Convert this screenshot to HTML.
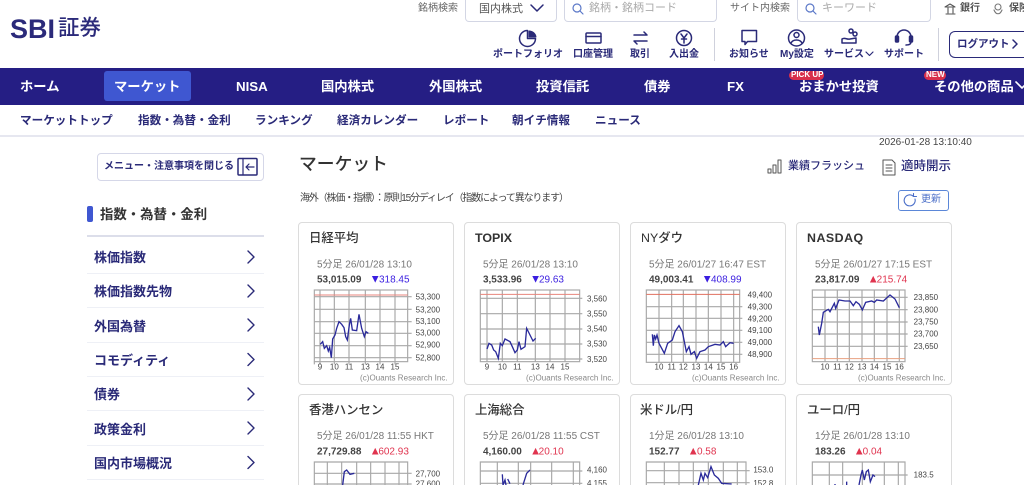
<!DOCTYPE html>
<html lang="ja"><head><meta charset="utf-8"><title>マーケット</title>
<style>
html,body{margin:0;padding:0;background:#fff;width:1024px;height:485px;overflow:hidden}
#w{position:absolute;left:0;top:0;width:1024px;height:485px;overflow:hidden;font-family:"Liberation Sans","Noto Sans CJK JP",sans-serif;color:#333}
.t{position:absolute;white-space:nowrap;line-height:1}
.box{position:absolute;box-sizing:border-box}
.n{color:#fff;font-weight:700;font-size:13.3px;top:80px}
.s{color:#2a2a78;font-weight:700;font-size:11.6px;top:115px}
.l{color:#2a2a78;font-weight:700;font-size:10px;top:50px}
.g{color:#666;font-size:10px;top:4px}
.p{color:#aaa;font-size:11px;top:3px}
.m{color:#2a2a78;font-weight:700;font-size:13px}
.sep{position:absolute;left:87px;width:177px;height:1px;background:#eef0f6}
.card{position:absolute;box-sizing:border-box;width:156px;height:163px;border:1px solid #dcdcdc;border-radius:4px;background:#fff}
.c2{height:91px;border-bottom:none;border-radius:4px 4px 0 0}
.top{top:0;height:22px;border:1px solid #d3d6e4;border-top:none;border-radius:0 0 4px 4px}
.ct{color:#333;font-size:12.4px;font-weight:500;top:232px}
svg{position:absolute;left:0;top:0}
svg text{font-family:"Liberation Sans","Noto Sans CJK JP",sans-serif}
</style></head><body><div id="w">

<div class="t" style="left:10px;top:16px;font-size:27px;font-weight:700;color:#2b2a7a;font-family:'Liberation Sans',sans-serif">SBI</div>
<div class="t" style="left:58px;top:18px;font-size:21.5px;font-weight:500;color:#2b2a7a">証券</div>

<div class="t g" style="left:418px">銘柄検索</div>
<div class="box top" style="left:465px;width:92px"></div>
<div class="t" style="left:479px;top:4px;font-size:11px;color:#555">国内株式</div>
<div class="box top" style="left:564px;width:153px"></div>
<div class="t p" style="left:589px">銘柄・銘柄コード</div>
<div class="t g" style="left:730px">サイト内検索</div>
<div class="box top" style="left:797px;width:134px"></div>
<div class="t p" style="left:822px">キーワード</div>
<div class="t" style="left:960px;top:4px;font-size:10px;color:#555;font-weight:700">銀行</div>
<div class="t" style="left:1009px;top:4px;font-size:10px;color:#555;font-weight:700">保険</div>

<div class="t l" style="left:493px">ポートフォリオ</div>
<div class="t l" style="left:573px">口座管理</div>
<div class="t l" style="left:630px">取引</div>
<div class="t l" style="left:669px">入出金</div>
<div class="t l" style="left:729px">お知らせ</div>
<div class="t l" style="left:780px">My設定</div>
<div class="t l" style="left:824px">サービス</div>
<div class="t l" style="left:884px">サポート</div>
<div class="box" style="left:714px;top:28px;width:1px;height:33px;background:#cfd1dc"></div>
<div class="box" style="left:938px;top:28px;width:1px;height:33px;background:#cfd1dc"></div>
<div class="box" style="left:949px;top:31px;width:75px;height:27px;border:1px solid #2a2a78;border-right:none;border-radius:6px 0 0 6px"></div>
<div class="t" style="left:957px;top:39px;font-size:10.5px;font-weight:700;color:#2a2a78">ログアウト</div>

<div class="box" style="left:0;top:68px;width:1024px;height:37px;background:#251e84"></div>
<div class="box" style="left:104px;top:71px;width:87px;height:30px;background:#3f57d1;border-radius:3px"></div>
<div class="t n" style="left:20px">ホーム</div>
<div class="t n" style="left:114px">マーケット</div>
<div class="t n" style="left:236px">NISA</div>
<div class="t n" style="left:321px">国内株式</div>
<div class="t n" style="left:429px">外国株式</div>
<div class="t n" style="left:536px">投資信託</div>
<div class="t n" style="left:644px">債券</div>
<div class="t n" style="left:727px">FX</div>
<div class="t n" style="left:799px">おまかせ投資</div>
<div class="t n" style="left:934px">その他の商品</div>
<div class="box" style="left:789px;top:71px;width:35px;height:9px;background:#d92f4b;border-radius:5px"></div>
<div class="t" style="left:791px;top:71px;font-size:8px;font-weight:700;color:#fff">PICK UP</div>
<div class="box" style="left:924px;top:71px;width:22px;height:9px;background:#d92f4b;border-radius:5px"></div>
<div class="t" style="left:926px;top:71px;font-size:8px;font-weight:700;color:#fff">NEW</div>

<div class="t s" style="left:20px">マーケットトップ</div>
<div class="t s" style="left:138px">指数・為替・金利</div>
<div class="t s" style="left:255px">ランキング</div>
<div class="t s" style="left:337px">経済カレンダー</div>
<div class="t s" style="left:443px">レポート</div>
<div class="t s" style="left:512px">朝イチ情報</div>
<div class="t s" style="left:595px">ニュース</div>
<div class="box" style="left:0;top:135px;width:1024px;height:2px;background:#e6e7f0"></div>

<div class="box" style="left:97px;top:153px;width:167px;height:28px;border:1px solid #d5d7e8;border-radius:4px"></div>
<div class="t" style="left:104px;top:162px;font-size:10px;font-weight:700;color:#2a2a78">メニュー・注意事項を閉じる</div>
<div class="box" style="left:87px;top:206px;width:6px;height:16px;background:#3f57d1;border-radius:2px"></div>
<div class="t" style="left:100px;top:208px;font-size:13.4px;font-weight:700;color:#333">指数・為替・金利</div>
<div class="box" style="left:87px;top:235px;width:177px;height:2px;background:#dcdeea"></div>
<div class="t m" style="left:94px;top:251px">株価指数</div><div class="sep" style="top:273px"></div>
<div class="t m" style="left:94px;top:285px">株価指数先物</div><div class="sep" style="top:307px"></div>
<div class="t m" style="left:94px;top:320px">外国為替</div><div class="sep" style="top:342px"></div>
<div class="t m" style="left:94px;top:354px">コモディティ</div><div class="sep" style="top:376px"></div>
<div class="t m" style="left:94px;top:388px">債券</div><div class="sep" style="top:410px"></div>
<div class="t m" style="left:94px;top:423px">政策金利</div><div class="sep" style="top:445px"></div>
<div class="t m" style="left:94px;top:457px">国内市場概況</div><div class="sep" style="top:479px"></div>

<div class="t" style="left:879px;top:138px;font-size:10px;color:#444">2026-01-28 13:10:40</div>
<div class="t" style="left:299px;top:156px;font-size:17.8px;font-weight:500;color:#333">マーケット</div>
<div class="t" style="left:788px;top:161px;font-size:11px;font-weight:500;color:#2a2a78">業績フラッシュ</div>
<div class="t" style="left:901px;top:160px;font-size:12.5px;font-weight:500;color:#2a2a78">適時開示</div>
<div class="t" style="left:300px;top:194px;font-size:10px;letter-spacing:-1.15px;color:#444">海外（株価・指標）：原則15分ディレイ（指数によって異なります）</div>
<div class="box" style="left:898px;top:190px;width:51px;height:21px;border:1px solid #5b87d8;border-radius:3px"></div>
<div class="t" style="left:921px;top:195px;font-size:10px;color:#4a6ec8">更新</div>

<div class="card" style="left:298px;top:222px"></div>
<div class="card" style="left:464px;top:222px"></div>
<div class="card" style="left:630px;top:222px"></div>
<div class="card" style="left:796px;top:222px"></div>
<div class="card c2" style="left:298px;top:394px"></div>
<div class="card c2" style="left:464px;top:394px"></div>
<div class="card c2" style="left:630px;top:394px"></div>
<div class="card c2" style="left:796px;top:394px"></div>
<div class="t ct" style="left:309px">日経平均</div>
<div class="t ct" style="left:475px;font-weight:700">TOPIX</div>
<div class="t ct" style="left:641px">NYダウ</div>
<div class="t ct" style="left:807px;font-weight:700;letter-spacing:.5px">NASDAQ</div>
<div class="t ct" style="left:309px;top:404px">香港ハンセン</div>
<div class="t ct" style="left:475px;top:404px">上海総合</div>
<div class="t ct" style="left:640px;top:404px">米ドル/円</div>
<div class="t ct" style="left:807px;top:404px">ユーロ/円</div>

<svg width="1024" height="485" viewBox="0 0 1024 485" fill="none">
<g stroke="#2a2a78" stroke-width="1.5" stroke-linecap="round" stroke-linejoin="round">
<path d="M531 5l6 6 6-6"/>
<circle cx="577" cy="8" r="4" stroke="#5b78c8" stroke-width="1.2"/><path d="M580 11l3 3" stroke="#5b78c8" stroke-width="1.2"/>
<circle cx="810" cy="8" r="4" stroke="#5b78c8" stroke-width="1.2"/><path d="M813 11l3 3" stroke="#5b78c8" stroke-width="1.2"/>
<path d="M945 7l5-3 5 3zM946 14h9M948 8v5M953 8v5" stroke="#555" stroke-width="1.1"/>
<circle cx="998" cy="7" r="3" stroke="#777" stroke-width="1.1"/><path d="M994 10c2 5 6 5 8 0" stroke="#777" stroke-width="1.1"/>
<path d="M527.500 30.500a8 8 0 1 0 8 8h-8z"/><path d="M529 31a7 7 0 0 1 7 6h-7z" fill="#2a2a78" stroke-width="1"/>
<rect x="586" y="33" width="15" height="10" rx="1"/><path d="M586 36.500h15"/>
<path d="M634 35h13l-3-3M647 41h-13l3 3"/>
<circle cx="684" cy="38" r="7.500"/><path d="M681 34l3 4 3-4M684 38v5M681.500 39h5"/>
<path d="M742 30.500h14.500v11h-9l-2.500 3v-3h-3z"/>
<circle cx="796.500" cy="38" r="8"/><circle cx="796.500" cy="35" r="2.500"/><path d="M791 43c2-4 9-4 11 0"/>
<circle cx="851" cy="31" r="2"/><circle cx="855" cy="34" r="2"/><path d="M842 39c3-2 5 1 8 0l6-1v5h-14z"/>
<path d="M897 39v-2a7 7 0 0 1 14 0v2"/><rect x="895.500" y="36" width="3" height="6" rx="1" fill="#2a2a78"/><rect x="909.500" y="36" width="3" height="6" rx="1" fill="#2a2a78"/><path d="M911 42c0 2-2 3-5 3"/>
<path d="M866 52l3.500 3.500 3.500-3.500" stroke-width="1.2"/>
<path d="M1013 40l4 4-4 4" stroke-width="1.5"/>
<path d="M1016 82l6 6 6-6" stroke="#fff" stroke-width="1.6"/>
<rect x="238" y="158.500" width="19" height="16.500" rx="1"/><path d="M243 158.500v16.500M254 167h-8M249 164l-3 3 3 3" stroke-width="1.2"/>
<path d="M248 251l6 6-6 6M248 285l6 6-6 6M248 319l6 6-6 6M248 353.500l6 6-6 6M248 388l6 6-6 6M248 422l6 6-6 6M248 456.500l6 6-6 6" stroke-width="1.4"/>
<g stroke="#555" stroke-width="1"><rect x="768" y="169" width="3" height="4"/><rect x="773" y="165" width="3" height="8"/><rect x="778" y="160" width="3" height="13"/></g>
<path d="M883 160h9l3 3v12h-12zM886 165h6M886 168h6M886 171h6" stroke="#555" stroke-width="1"/>
<path d="M915 199a5.500 5.500 0 1 1-2-3M913.500 193.500v3h3" stroke="#4a6ec8" stroke-width="1.1"/>
</g>

<!-- Row 1 left -->
<g transform="translate(295,215) scale(.33333)" font-size="24">
<g stroke="#a8a8a8" stroke-width="3.500">
<path d="M75 225v215M118 225v215M162 225v215M211 225v215M255 225v215M300 225v215M58 245h292M58 283h292M58 320h292M58 355h292M58 392h292M58 428h292"/>
<rect x="58" y="225" width="280" height="215"/>
<path d="M58 440v8M75 440v8M118 440v8M162 440v8M211 440v8M255 440v8M300 440v8"/>
</g>
<path d="M58 240h280" stroke="#e8857c" stroke-width="3"/>
<polyline points="76,388 83,380 88,400 95,392 100,408 104,397 109,428 113,372 120,360 125,340 132,320 140,328 147,338 152,365 157,375 163,330 167,310 172,345 185,347 192,298 200,340 208,365 213,350 220,355" stroke="#2a2a9a" stroke-width="4"/>
<g fill="#444"><text x="362" y="254">53,300</text><text x="362" y="292">53,200</text><text x="362" y="327">53,100</text><text x="362" y="362">53,000</text><text x="362" y="398">52,900</text><text x="362" y="436">52,800</text></g>
<g fill="#444" text-anchor="middle"><text x="75" y="463">9</text><text x="118" y="463">10</text><text x="162" y="463">11</text><text x="211" y="463">13</text><text x="255" y="463">14</text><text x="300" y="463">15</text></g>
<text x="195" y="496" fill="#888" textLength="263">(c)Ouants Research Inc.</text>
<text x="66" y="157" font-size="30" fill="#777">5分足 26/01/28 13:10</text>
<text x="66" y="202" font-size="30" font-weight="700" fill="#444">53,015.09</text>
<text y="202" font-size="30" fill="#3a1ee0"><tspan x="224" font-size="34">▼</tspan><tspan x="252">318.45</tspan></text>

<g stroke="#a8a8a8" stroke-width="3.500">
<path d="M576 225v215M622 225v215M667 225v215M721 225v215M765 225v215M810 225v215M556 250h306M556 296h306M556 342h306M556 387h306M556 432h306"/>
<rect x="556" y="225" width="298" height="215"/>
</g>
<path d="M556 238h298" stroke="#e8857c" stroke-width="3"/>
<polyline points="576,402 582,385 590,390 596,405 602,410 610,430 616,385 622,392 630,372 645,380 652,395 660,413 667,405 672,380 678,403 690,395 695,340 705,360 714,378 722,370" stroke="#2a2a9a" stroke-width="4"/>
<g fill="#444"><text x="876" y="259">3,560</text><text x="876" y="305">3,550</text><text x="876" y="350">3,540</text><text x="876" y="395">3,530</text><text x="876" y="441">3,520</text></g>
<g fill="#444" text-anchor="middle"><text x="576" y="463">9</text><text x="622" y="463">10</text><text x="667" y="463">11</text><text x="721" y="463">13</text><text x="765" y="463">14</text><text x="810" y="463">15</text></g>
<text x="693" y="496" fill="#888" textLength="263">(c)Ouants Research Inc.</text>
<text x="564" y="157" font-size="30" fill="#777">5分足 26/01/28 13:10</text>
<text x="564" y="202" font-size="30" font-weight="700" fill="#444">3,533.96</text>
<text y="202" font-size="30" fill="#3a1ee0"><tspan x="705" font-size="34">▼</tspan><tspan x="732">29.63</tspan></text>
</g>

<!-- Row 1 right -->
<g transform="translate(625,215) scale(.33333)" font-size="24">
<g stroke="#a8a8a8" stroke-width="3.500">
<path d="M102 225v217M140 225v217M175 225v217M213 225v217M250 225v217M288 225v217M326 225v217M64 275h288M64 310h288M64 346h288M64 382h288M64 418h288"/>
<rect x="64" y="225" width="280" height="217"/>
</g>
<path d="M64 238h280" stroke="#e0705f" stroke-width="3"/>
<polyline points="82,358 85,392 88,360 92,372 96,360 102,385 118,415 128,385 142,375 150,350 162,332 172,350 184,410 192,395 198,418 208,410 215,430 225,410 240,405 250,395 270,388 285,390 295,380 302,395 315,383 326,385" stroke="#2a2a9a" stroke-width="4"/>
<g fill="#444"><text x="368" y="247">49,400</text><text x="368" y="284">49,300</text><text x="368" y="319">49,200</text><text x="368" y="354">49,100</text><text x="368" y="390">49,000</text><text x="368" y="426">48,900</text></g>
<g fill="#444" text-anchor="middle"><text x="102" y="463">10</text><text x="140" y="463">11</text><text x="175" y="463">12</text><text x="213" y="463">13</text><text x="250" y="463">14</text><text x="288" y="463">15</text><text x="326" y="463">16</text></g>
<text x="201" y="496" fill="#888" textLength="263">(c)Ouants Research Inc.</text>
<text x="72" y="157" font-size="30" fill="#777">5分足 26/01/27 16:47 EST</text>
<text x="72" y="202" font-size="30" font-weight="700" fill="#444">49,003.41</text>
<text y="202" font-size="30" fill="#3a1ee0"><tspan x="230" font-size="34">▼</tspan><tspan x="258">408.99</tspan></text>

<g stroke="#a8a8a8" stroke-width="3.500">
<path d="M600 225v215M637 225v215M673 225v215M711 225v215M748 225v215M786 225v215M823 225v215M562 247h286M562 284h286M562 321h286M562 357h286M562 394h286"/>
<rect x="562" y="225" width="278" height="215"/>
</g>
<path d="M562 431h278" stroke="#e8a080" stroke-width="3"/>
<polyline points="580,335 583,360 590,325 595,292 610,283 615,290 628,265 632,280 642,255 660,258 675,258 685,272 693,260 703,268 712,285 722,262 740,258 748,262 755,255 775,258 795,240 810,252 823,278" stroke="#2a2a9a" stroke-width="4"/>
<g fill="#444"><text x="866" y="255">23,850</text><text x="866" y="292">23,800</text><text x="866" y="329">23,750</text><text x="866" y="365">23,700</text><text x="866" y="402">23,650</text></g>
<g fill="#444" text-anchor="middle"><text x="600" y="463">10</text><text x="637" y="463">11</text><text x="673" y="463">12</text><text x="711" y="463">13</text><text x="748" y="463">14</text><text x="786" y="463">15</text><text x="823" y="463">16</text></g>
<text x="699" y="496" fill="#888" textLength="263">(c)Ouants Research Inc.</text>
<text x="570" y="157" font-size="30" fill="#777">5分足 26/01/27 17:15 EST</text>
<text x="570" y="202" font-size="30" font-weight="700" fill="#444">23,817.09</text>
<text y="202" font-size="30" fill="#e0344f"><tspan x="728" font-size="34">▲</tspan><tspan x="755">215.74</tspan></text>
</g>

<!-- Row 2 left -->
<g transform="translate(295,385) scale(.33333)" font-size="24">
<g stroke="#a8a8a8" stroke-width="3.500">
<path d="M97 231v69M140 231v69M185 231v69M227 231v69M270 231v69M312 231v69M58 265h292M58 297h292"/>
<path d="M58 300V231H338V300"/>
</g>
<polyline points="143,300 148,260 155,255 165,268 178,265" stroke="#2a2a9a" stroke-width="4"/>
<g fill="#444"><text x="362" y="275">27,700</text><text x="362" y="304">27,600</text></g>
<text x="66" y="162" font-size="30" fill="#777">5分足 26/01/28 11:55 HKT</text>
<text x="66" y="208" font-size="30" font-weight="700" fill="#444">27,729.88</text>
<text y="208" font-size="30" fill="#e0344f"><tspan x="224" font-size="34">▲</tspan><tspan x="250">602.93</tspan></text>

<g stroke="#a8a8a8" stroke-width="3.500">
<path d="M607 231v69M670 231v69M707 231v69M770 231v69M835 231v69M556 258h306M556 295h306"/>
<path d="M556 300V231H854V300"/>
</g>
<path d="M622 268l2 32M624 300l6-15 3 15M638 282l7 14M684 300l11-35 10-10" stroke="#2a2a9a" stroke-width="4"/>
<g fill="#444"><text x="876" y="263">4,160</text><text x="876" y="303">4,155</text></g>
<text x="564" y="162" font-size="30" fill="#777">5分足 26/01/28 11:55 CST</text>
<text x="564" y="208" font-size="30" font-weight="700" fill="#444">4,160.00</text>
<text y="208" font-size="30" fill="#e0344f"><tspan x="705" font-size="34">▲</tspan><tspan x="731">20.10</tspan></text>
</g>

<!-- Row 2 right -->
<g transform="translate(625,385) scale(.33333)" font-size="24">
<g stroke="#a8a8a8" stroke-width="3.500">
<path d="M118 231v69M162 231v69M205 231v69M250 231v69M295 231v69M337 231v69M64 257h310M64 293h310"/>
<path d="M64 300V231H363V300"/>
</g>
<polyline points="220,300 228,265 235,285 240,265 248,278 258,245 268,270 280,280 290,295 320,297" stroke="#2a2a9a" stroke-width="4"/>
<g fill="#444"><text x="385" y="263">153.0</text><text x="385" y="303">152.8</text></g>
<text x="72" y="162" font-size="30" fill="#777">1分足 26/01/28 13:10</text>
<text x="72" y="208" font-size="30" font-weight="700" fill="#444">152.77</text>
<text y="208" font-size="30" fill="#e0344f"><tspan x="188" font-size="34">▲</tspan><tspan x="216">0.58</tspan></text>

<g stroke="#a8a8a8" stroke-width="3.500">
<path d="M613 231v69M653 231v69M712 231v69M778 231v69M820 231v69M562 270h286"/>
<path d="M562 300V231H840V300"/>
</g>
<path d="M630 297v3M665 290v10M702 300l6-30 4-15 6 30 6-25 6-5 6 35 8-20 6 5" stroke="#2a2a9a" stroke-width="4"/>
<text x="866" y="278" fill="#444">183.5</text>
<text x="570" y="162" font-size="30" fill="#777">1分足 26/01/28 13:10</text>
<text x="570" y="208" font-size="30" font-weight="700" fill="#444">183.26</text>
<text y="208" font-size="30" fill="#e0344f"><tspan x="686" font-size="34">▲</tspan><tspan x="713">0.04</tspan></text>
</g>
</svg>
</div></body></html>
